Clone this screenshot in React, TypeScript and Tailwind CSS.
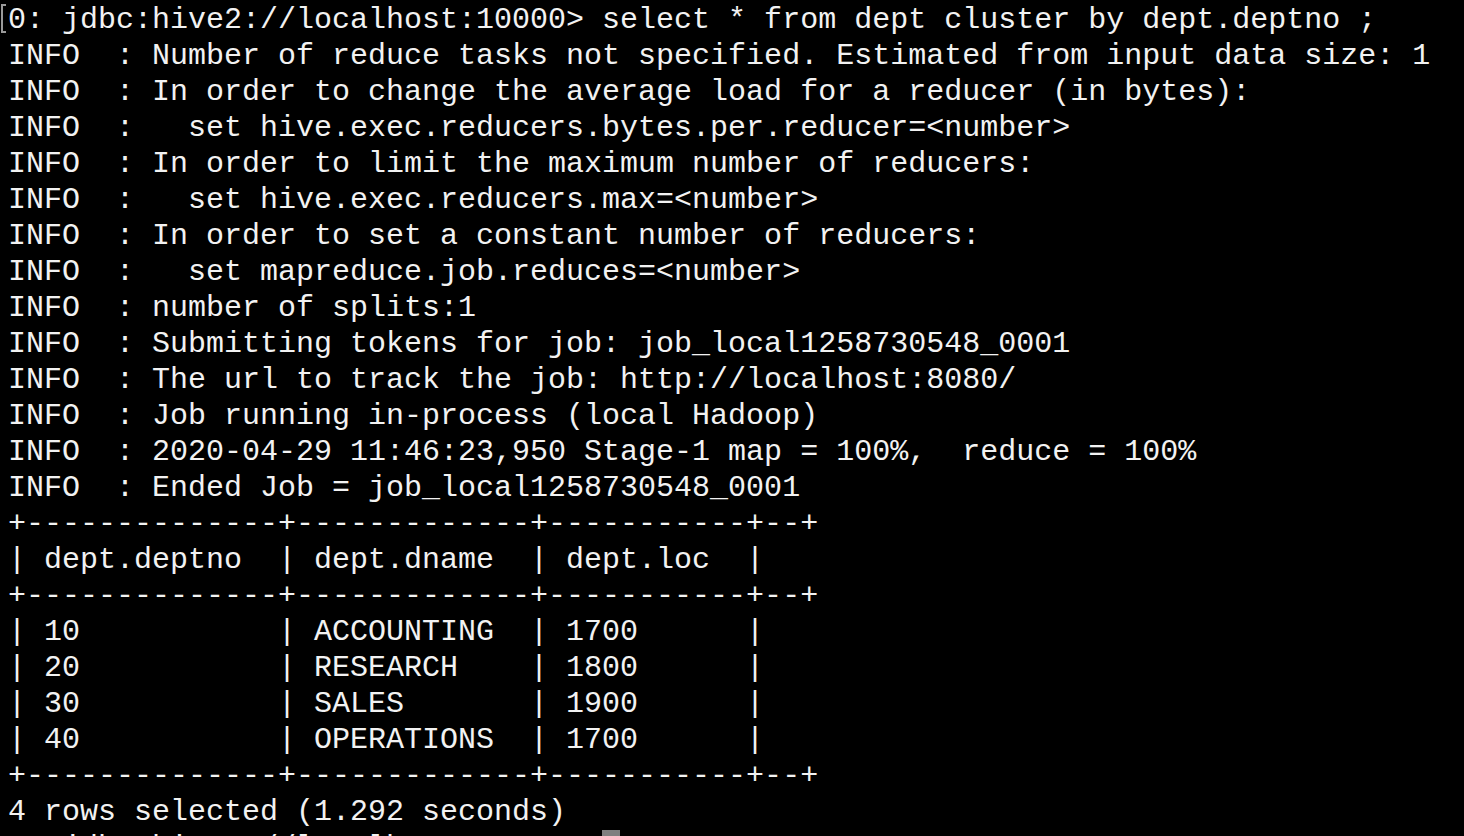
const lines: string[] = [
  "0: jdbc:hive2://localhost:10000> select * from dept cluster by dept.deptno ;",
  "INFO  : Number of reduce tasks not specified. Estimated from input data size: 1",
  "INFO  : In order to change the average load for a reducer (in bytes):",
  "INFO  :   set hive.exec.reducers.bytes.per.reducer=<number>",
  "INFO  : In order to limit the maximum number of reducers:",
  "INFO  :   set hive.exec.reducers.max=<number>",
  "INFO  : In order to set a constant number of reducers:",
  "INFO  :   set mapreduce.job.reduces=<number>",
  "INFO  : number of splits:1",
  "INFO  : Submitting tokens for job: job_local1258730548_0001",
  "INFO  : The url to track the job: http://localhost:8080/",
  "INFO  : Job running in-process (local Hadoop)",
  "INFO  : 2020-04-29 11:46:23,950 Stage-1 map = 100%,  reduce = 100%",
  "INFO  : Ended Job = job_local1258730548_0001",
  "+--------------+-------------+-----------+--+",
  "| dept.deptno  | dept.dname  | dept.loc  |",
  "+--------------+-------------+-----------+--+",
  "| 10           | ACCOUNTING  | 1700      |",
  "| 20           | RESEARCH    | 1800      |",
  "| 30           | SALES       | 1900      |",
  "| 40           | OPERATIONS  | 1700      |",
  "+--------------+-------------+-----------+--+",
  "4 rows selected (1.292 seconds)",
];

export default function App() {
  return (
    <div
      className="relative w-[1464px] h-[836px] overflow-hidden bg-black text-[#f2f2f2] pl-2 pt-[2px] text-[30px] leading-[36px]"
      style={{ fontFamily: '"Liberation Mono", "DejaVu Sans Mono", monospace' }}
    >
      {/* mark bracket on the first prompt */}
      <div className="absolute left-[1px] top-[4px] h-[29px] w-[5px] border-l-2 border-t-2 border-b-2 border-[#9a9a9a]" />
      {lines.map((l, i) => (
        <div key={i} className="whitespace-pre h-[36px]">
          {l}
        </div>
      ))}
      <div className="whitespace-pre h-[36px] flex">
        <span>0: jdbc:hive2://localhost:10000&gt; </span>
        <span className="inline-block w-[18px] h-[36px] bg-[#7f7f7f]" />
      </div>
    </div>
  );
}
